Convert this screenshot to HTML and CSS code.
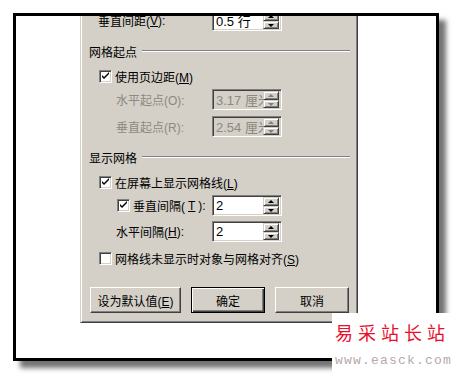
FILE: index.html
```html
<!DOCTYPE html>
<html lang="zh-CN">
<head>
    <meta charset="UTF-8">
    <title>网格线和参考线</title>
    <link rel="stylesheet" href="styles.css">
</head>
<body>
    <div class="frame">
        <div class="dialog">
            <!-- 上一段被截掉的间距 -->
            <div class="row field-row">
                <span class="label ind1">垂直间距(<u>V</u>):</span>
                <div class="field">
                    <span class="value">0.5 行</span>
                    <div class="spin"><span class="up"></span><span class="down"></span></div>
                </div>
            </div>

            <div class="title-row">
                <span>网格起点</span>
                <span class="rule"></span>
            </div>
            <div class="row check-row">
                <span class="box checked"></span>
                <span>使用页边距(<u>M</u>)</span>
            </div>
            <div class="row field-row">
                <span class="label ind2 off">水平起点(O):</span>
                <div class="field disabled">
                    <span class="value">3.17 厘米</span>
                    <div class="spin"><span class="up"></span><span class="down"></span></div>
                </div>
            </div>
            <div class="row field-row gap6">
                <span class="label ind2 off">垂直起点(R):</span>
                <div class="field disabled">
                    <span class="value">2.54 厘米</span>
                    <div class="spin"><span class="up"></span><span class="down"></span></div>
                </div>
            </div>

            <div class="title-row">
                <span>显示网格</span>
                <span class="rule"></span>
            </div>
            <div class="row check-row">
                <span class="box checked"></span>
                <span>在屏幕上显示网格线(<u>L</u>)</span>
            </div>
            <div class="row field-row">
                <span class="label ind3"><span class="box checked"></span>垂直间隔(<u>T</u>):</span>
                <div class="field">
                    <span class="value">2</span>
                    <div class="spin"><span class="up"></span><span class="down"></span></div>
                </div>
            </div>
            <div class="row field-row">
                <span class="label ind2">水平间隔(<u>H</u>):</span>
                <div class="field">
                    <span class="value">2</span>
                    <div class="spin"><span class="up"></span><span class="down"></span></div>
                </div>
            </div>
            <div class="row check-row last">
                <span class="box"></span>
                <span>网格线未显示时对象与网格对齐(<u>S</u>)</span>
            </div>

            <div class="buttons">
                <button class="btn wide">设为默认值(<u>E</u>)</button>
                <button class="btn default">确定</button>
                <button class="btn">取消</button>
            </div>
        </div>
    </div>

    <div class="stamp">
        <div class="stamp-name">易采站长站</div>
        <div class="stamp-url">www.easck.com</div>
    </div>
</body>
</html>
```

FILE: styles.css
```css
body {
    margin: 0;
    width: 452px;
    height: 374px;
    background: #fff;
    font-family: "Liberation Sans", "Noto Sans CJK SC", sans-serif;
    font-size: 12px;
    color: #000;
    position: relative;
    overflow: hidden;
}

u {
    text-decoration: underline;
    text-underline-offset: 1px;
}

.frame {
    margin: 13px 0 0 13px;
    width: 426px;
    height: 348px;
    box-sizing: border-box;
    border: 3px solid #000;
    background: #fff;
    box-shadow: 7px 7px 5px rgba(0, 0, 0, 0.55);
    overflow: hidden;
}

.dialog {
    margin: -10px 0 0 64px;
    width: 278px;
    box-sizing: border-box;
    background: #d4d0c8;
    border: 1px solid;
    border-color: #d4d0c8 #404040 #404040 #d4d0c8;
    box-shadow: inset 1px 1px 0 #fff, inset -1px -1px 0 #808080;
    padding: 3px 8px 9px 8px;
}

.row {
    display: flex;
    align-items: center;
}

.field-row {
    display: grid;
    grid-template-columns: 123px 70px;
    height: 21px;
    margin-top: 5px;
    align-items: center;
}

.field-row:first-child {
    margin-top: 0;
}

.gap6 {
    margin-top: 6px;
}

.label {
    display: flex;
    align-items: center;
    white-space: nowrap;
}

.ind1 { padding-left: 9px; }
.ind2 { padding-left: 27px; }
.ind3 { padding-left: 28px; gap: 3px; }

.off {
    color: #8c8980;
}

.title-row {
    display: flex;
    align-items: center;
    gap: 5px;
    height: 14px;
    margin-top: 13px;
    margin-right: -1px;
}

.rule {
    flex: 1;
    border-top: 1px solid #808080;
    border-bottom: 1px solid #fff;
}

.check-row {
    height: 16px;
    margin-top: 10px;
    padding-left: 10px;
    gap: 3px;
}

.check-row.last {
    margin-top: 8px;
}

.box {
    width: 13px;
    height: 13px;
    box-sizing: border-box;
    border: 1px solid;
    border-color: #808080 #fff #fff #808080;
    box-shadow: inset 1px 1px 0 #404040, inset -1px -1px 0 #d4d0c8;
    background: #fff;
    flex: none;
}

.box.checked {
    background: #fff url("data:image/svg+xml;utf8,<svg xmlns='http://www.w3.org/2000/svg' width='11' height='11'><path d='M2 4 L2 6 L4 8 L9 3 L9 1 L4 6 Z' fill='black'/></svg>") center / 11px 11px no-repeat;
}

.field {
    width: 70px;
    height: 21px;
    box-sizing: border-box;
    border: 1px solid;
    border-color: #808080 #fff #fff #808080;
    box-shadow: inset 1px 1px 0 #404040, inset -1px -1px 0 #d4d0c8;
    background: #fff;
    display: flex;
    align-items: center;
    padding: 2px 2px 2px 2px;
}

.field.disabled {
    background: #d4d0c8;
    color: #8c8980;
}

.value {
    flex: 1;
    overflow: hidden;
    white-space: nowrap;
    padding-left: 1px;
    font-size: 13px;
}

.spin {
    width: 16px;
    height: 17px;
    display: flex;
    flex-direction: column;
    flex: none;
}

.spin span {
    flex: 1;
    box-sizing: border-box;
    background: #d4d0c8;
    border: 1px solid;
    border-color: #d4d0c8 #404040 #404040 #d4d0c8;
    box-shadow: inset 1px 1px 0 #fff, inset -1px -1px 0 #808080;
    position: relative;
}

.spin span::after {
    content: "";
    position: absolute;
    left: 4px;
    top: 2px;
    border-left: 3px solid transparent;
    border-right: 3px solid transparent;
}

.spin .up::after {
    border-bottom: 3px solid #000;
}

.spin .down::after {
    border-top: 3px solid #000;
}

.disabled .spin .up::after {
    border-bottom-color: #808080;
}

.disabled .spin .down::after {
    border-top-color: #808080;
}

.buttons {
    display: flex;
    gap: 10px;
    margin-top: 21px;
    margin-left: 1px;
}

.btn {
    width: 75px;
    height: 26px;
    box-sizing: border-box;
    font: inherit;
    color: #000;
    background: #d4d0c8;
    border: 1px solid;
    border-color: #fff #404040 #404040 #fff;
    box-shadow: inset -1px -1px 0 #808080;
    padding: 0;
}

.btn.wide {
    width: 92px;
}

.btn.default {
    border: 1px solid #000;
    box-shadow: inset 1px 1px 0 #fff, inset -1px -1px 0 #404040, inset -2px -2px 0 #808080;
}

.stamp {
    position: absolute;
    left: 332px;
    top: 313px;
    width: 120px;
    height: 61px;
    background: #fff;
    padding-left: 3px;
    box-sizing: border-box;
}

.stamp-name {
    margin-top: 7px;
    font-family: "Noto Sans CJK SC", sans-serif;
    font-size: 18px;
    line-height: 24px;
    letter-spacing: 5px;
    color: #e8102a;
    white-space: nowrap;
}

.stamp-url {
    margin-top: 9px;
    font-family: "Liberation Mono", monospace;
    font-size: 13px;
    letter-spacing: 1.2px;
    color: #b5aaaa;
    white-space: nowrap;
}
```
